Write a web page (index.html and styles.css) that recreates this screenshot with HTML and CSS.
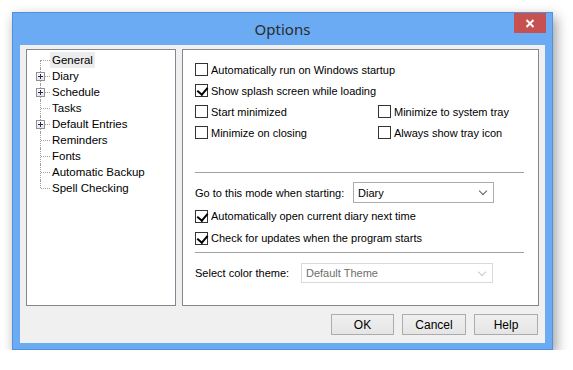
FILE: index.html
```html
<!DOCTYPE html>
<html lang="en">
<head>
  <meta charset="UTF-8" />
  <title>Options</title>
  <link rel="stylesheet" href="styles.css">
</head>
<body>
  <div class="window">
    <div class="titlebar">
      <span></span>
      <span class="title">Options</span>
      <button class="close" aria-label="Close">
        <svg width="10" height="9" viewBox="0 0 10 9">
          <path d="M1.5 1l7 7M8.5 1l-7 7" stroke="#fff" stroke-width="2" fill="none"/>
        </svg>
      </button>
    </div>

    <div class="client">
      <div class="panels">
        <ul class="tree">
          <li class="node first"><span class="branch"></span><span class="label selected">General</span></li>
          <li class="node"><span class="branch"><span class="plus"></span></span><span class="label">Diary</span></li>
          <li class="node"><span class="branch"><span class="plus"></span></span><span class="label">Schedule</span></li>
          <li class="node"><span class="branch"></span><span class="label">Tasks</span></li>
          <li class="node"><span class="branch"><span class="plus"></span></span><span class="label">Default Entries</span></li>
          <li class="node"><span class="branch"></span><span class="label">Reminders</span></li>
          <li class="node"><span class="branch"></span><span class="label">Fonts</span></li>
          <li class="node"><span class="branch"></span><span class="label">Automatic Backup</span></li>
          <li class="node last"><span class="branch"></span><span class="label">Spell Checking</span></li>
        </ul>

        <div class="page">
          <div class="opts">
            <label class="check wide"><span class="box"></span>Automatically run on Windows startup</label>
            <label class="check wide"><span class="box on"></span>Show splash screen while loading</label>
            <label class="check"><span class="box"></span>Start minimized</label>
            <label class="check"><span class="box"></span>Minimize to system tray</label>
            <label class="check"><span class="box"></span>Minimize on closing</label>
            <label class="check"><span class="box"></span>Always show tray icon</label>
          </div>

          <hr class="sep first-sep">

          <div class="field mode">
            <span class="field-label">Go to this mode when starting:</span>
            <div class="combo">
              <span>Diary</span>
              <span class="arrow"></span>
            </div>
          </div>
          <label class="check row"><span class="box on"></span>Automatically open current diary next time</label>
          <label class="check row"><span class="box on"></span>Check for updates when the program starts</label>

          <hr class="sep">

          <div class="field theme">
            <span class="field-label">Select color theme:</span>
            <div class="combo disabled">
              <span>Default Theme</span>
              <span class="arrow"></span>
            </div>
          </div>
        </div>
      </div>

      <div class="buttons">
        <button class="btn ok">OK</button>
        <button class="btn">Cancel</button>
        <button class="btn">Help</button>
      </div>
    </div>
  </div>
</body>
</html>
```

FILE: styles.css
```css
* { box-sizing: border-box; }
body {
  margin: 0;
  background: #fff;
  font-family: 'Liberation Sans', Arial, sans-serif;
  font-size: 11px;
  color: #000;
}
.window {
  width: 541px;
  height: 338px;
  margin: 12px 0 0 12px;
  background: #6aabf3;
  border: 1px solid #5490d8;
  box-shadow: 3px 5px 12px rgba(0,0,0,0.4);
  display: flex;
  flex-direction: column;
  padding: 0 7px 6px;
}
.titlebar {
  height: 32px;
  display: grid;
  grid-template-columns: 1fr auto 1fr;
  margin: 0 -7px;
}
.title {
  font-size: 15px;
  color: #2b2b2b;
  line-height: 32px;
  font-family: 'Noto Sans', sans-serif;
}
.close {
  justify-self: end;
  align-self: start;
  width: 32px;
  height: 20px;
  margin-right: 6px;
  border: none;
  padding: 0;
  background: #c75050;
  display: flex;
  align-items: center;
  justify-content: center;
}
.client {
  flex: 1;
  background: #f0f0f0;
  display: flex;
  flex-direction: column;
  padding: 4px 6px 0 6px;
}
.panels {
  display: flex;
  gap: 6px;
  height: 257px;
}

/* tree */
.tree {
  list-style: none;
  margin: 0;
  padding: 2px 0 0 0;
  width: 150px;
  flex-shrink: 0;
  background: #fff;
  border: 1px solid #828790;
}
.node {
  display: flex;
  align-items: center;
  height: 16px;
}
.branch {
  position: relative;
  width: 23px;
  height: 16px;
  flex-shrink: 0;
}
.branch::before {
  content: "";
  position: absolute;
  left: 13px;
  top: 0;
  bottom: 0;
  border-left: 1px dotted #a0a0a0;
}
.first .branch::before { top: 8px; }
.last .branch::before { bottom: 8px; }
.branch::after {
  content: "";
  position: absolute;
  left: 14px;
  right: 0;
  top: 8px;
  border-top: 1px dotted #a0a0a0;
}
.plus {
  position: absolute;
  left: 9px;
  top: 4px;
  width: 9px;
  height: 9px;
  border: 1px solid #919191;
  background: linear-gradient(#fff, #e8e8e8);
  z-index: 1;
}
.plus::before, .plus::after {
  content: "";
  position: absolute;
  background: #1f2f55;
}
.plus::before { left: 1px; top: 3px; width: 5px; height: 1px; }
.plus::after { left: 3px; top: 1px; width: 1px; height: 5px; }
.label {
  padding: 0 2px;
  line-height: 16px;
  font-size: 11.5px;
  color: #000;
  white-space: nowrap;
}
.label.selected { background: #ececec; }

/* page */
.page {
  flex: 1;
  background: #fff;
  border: 1px solid #828790;
  padding: 9px 14px 0 12px;
}
.opts {
  display: grid;
  grid-template-columns: 183px 1fr;
  grid-auto-rows: 21px;
}
.check {
  display: flex;
  align-items: center;
  gap: 3px;
  white-space: nowrap;
}
.check.wide { grid-column: 1 / -1; }
.check.row { height: 22px; }
.box {
  width: 13px;
  height: 13px;
  border: 1px solid #333;
  background: #fff;
  flex-shrink: 0;
  position: relative;
}
.box.on::after {
  content: "";
  position: absolute;
  left: 3px;
  top: 0;
  width: 5px;
  height: 8px;
  border: solid #000;
  border-width: 0 2px 2px 0;
  transform: rotate(40deg);
}
.sep {
  border: none;
  border-top: 1px solid #a0a0a0;
  margin: 3px 0 10px;
}
.first-sep { margin-top: 29px; margin-bottom: 9px; }
.field {
  display: flex;
  align-items: center;
}
.field.mode { margin-bottom: 2px; }
.field-label { width: 158px; flex-shrink: 0; }
.theme .field-label { width: 106px; }
.combo {
  width: 141px;
  height: 21px;
  border: 1px solid #acacac;
  background: #fff;
  display: flex;
  align-items: center;
  justify-content: space-between;
  padding: 0 7px 0 4px;
}
.theme .combo { width: 192px; height: 20px; }
.arrow {
  width: 6px;
  height: 6px;
  border: solid #606060;
  border-width: 0 1.5px 1.5px 0;
  transform: rotate(45deg);
  margin-top: -3px;
}
.combo.disabled {
  border-color: #d9d9d9;
  color: #6d6d6d;
}
.combo.disabled .arrow { border-color: #c8c8c8; }

/* buttons */
.buttons {
  display: flex;
  justify-content: flex-end;
  gap: 8px;
  padding: 8px 1px 0 0;
}
.btn {
  width: 64px;
  height: 21px;
  border: 1px solid #acacac;
  background: linear-gradient(#f0f0f0, #e5e5e5);
  font-family: inherit;
  font-size: 12px;
  color: #000;
  padding: 0;
}
.btn.ok { width: 63px; }
```
